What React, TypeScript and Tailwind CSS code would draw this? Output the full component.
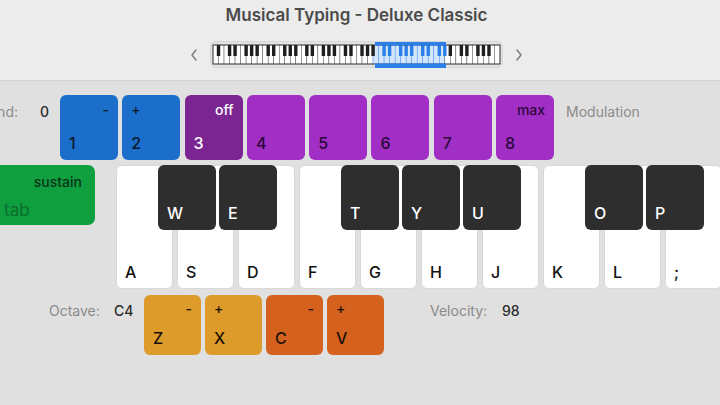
import React from 'react'

const FONT = { fontFamily: 'Inter, "Liberation Sans", Arial, sans-serif' }

const TOP_KEYS = [
  { k: '1', tag: '-', right: true, bg: 'bg-[#1b6fca]', fg: 'text-[#0b1a2e]' },
  { k: '2', tag: '+', right: false, bg: 'bg-[#1b6fca]', fg: 'text-[#0b1a2e]' },
  { k: '3', tag: 'off', right: true, bg: 'bg-[#7a2592]', fg: 'text-white' },
  { k: '4', tag: '', right: true, bg: 'bg-[#a22fc5]', fg: 'text-[#2a0838]' },
  { k: '5', tag: '', right: true, bg: 'bg-[#a22fc5]', fg: 'text-[#2a0838]' },
  { k: '6', tag: '', right: true, bg: 'bg-[#a22fc5]', fg: 'text-[#2a0838]' },
  { k: '7', tag: '', right: true, bg: 'bg-[#a22fc5]', fg: 'text-[#2a0838]' },
  { k: '8', tag: 'max', right: true, bg: 'bg-[#a22fc5]', fg: 'text-[#2a0838]' },
]

const OCTAVE_KEYS = [
  { k: 'Z', tag: '-', right: true, bg: 'bg-[#dc9b2b]' },
  { k: 'X', tag: '+', right: false, bg: 'bg-[#dc9b2b]' },
  { k: 'C', tag: '-', right: true, bg: 'bg-[#d5611f]' },
  { k: 'V', tag: '+', right: false, bg: 'bg-[#d5611f]' },
]

const WHITE = ['A', 'S', 'D', 'F', 'G', 'H', 'J', 'K', 'L', ';']

// black key offsets from the piano's left edge
const BLACK = [
  { k: 'W', x: 42 },
  { k: 'E', x: 103 },
  { k: 'T', x: 225 },
  { k: 'Y', x: 286 },
  { k: 'U', x: 347 },
  { k: 'O', x: 469 },
  { k: 'P', x: 530 },
]

function MiniPiano() {
  const n = 52
  const x0 = 3
  const y0 = 4
  const w = 287
  const h = 19
  const kw = w / n
  const hx0 = 165
  const hx1 = 236
  const inside = (x: number) => x >= hx0 && x <= hx1

  const whites = Array.from({ length: n }, (_, i) => x0 + i * kw)
  const blacks: number[] = []
  for (let i = 0; i < n - 1; i++) {
    const name = 'ABCDEFG'[i % 7]
    if ('ACDFG'.includes(name)) blacks.push(x0 + (i + 1) * kw - 1.7)
  }

  return (
    <div className="w-[293px] h-[27px] rounded-[6px] bg-[#e3e3e3] border border-[#d6d6d6]">
      <svg width="293" height="27" viewBox="0 0 293 27" className="block -m-px">
        <rect x={hx0} y={1} width={hx1 - hx0} height={26} fill="#2a7fe8" />
        {whites.map((x, i) => (
          <rect
            key={i}
            x={x}
            y={y0}
            width={kw}
            height={h}
            fill={inside(x + kw / 2) ? '#d3e5fb' : '#ffffff'}
            stroke={inside(x + kw / 2) ? '#5a9cec' : '#555'}
            strokeWidth={0.5}
          />
        ))}
        {blacks.map((x, i) => (
          <rect
            key={i}
            x={x}
            y={y0}
            width={3.4}
            height={11}
            fill={inside(x + 1.7) ? '#2a7fe8' : '#1e1e1e'}
          />
        ))}
        <rect x={x0} y={y0} width={w} height={h} fill="none" stroke="#333" strokeWidth={0.8} />
        <rect x={hx0} y={1} width={hx1 - hx0} height={3.5} fill="#2a7fe8" />
        <rect x={hx0} y={22.5} width={hx1 - hx0} height={4.5} fill="#2a7fe8" />
      </svg>
    </div>
  )
}

function Chevron({ dir }: { dir: 'left' | 'right' }) {
  return (
    <svg width="8" height="12" viewBox="0 0 8 12" className="text-[#7a7a7a]">
      <polyline
        points={dir === 'left' ? '6,1 2,6 6,11' : '2,1 6,6 2,11'}
        fill="none"
        stroke="currentColor"
        strokeWidth="1.4"
        strokeLinecap="round"
        strokeLinejoin="round"
      />
    </svg>
  )
}

export default function App() {
  return (
    <div className="w-[720px] h-[405px] overflow-hidden bg-[#e0e0e0] flex flex-col" style={FONT}>
      <header className="h-[81px] shrink-0 bg-[#ececec] border-b border-[#d2d2d2] flex flex-col items-center pr-[7px]">
        <h1 className="mt-[5px] text-[17px] leading-[21px] font-semibold text-[#4b4b4b]">
          Musical Typing - Deluxe Classic
        </h1>
        <div className="mt-[15px] flex items-center gap-[12px]">
          <Chevron dir="left" />
          <MiniPiano />
          <Chevron dir="right" />
        </div>
      </header>

      <div className="flex flex-col pt-[14px]">
        {/* pitch bend + modulation row */}
        <div className="flex items-start h-[65px]">
          <div className="w-[18px] flex justify-end whitespace-nowrap">
            <span className="mt-[6px] text-[14px] text-[#8a8a8a]">Pitch Bend:</span>
          </div>
          <span className="ml-[22px] w-[20px] mt-[6px] text-[14px] font-medium text-[#2a2a2a]">0</span>
          <div className="flex gap-[4.3px]">
            {TOP_KEYS.map((t) => (
              <div
                key={t.k}
                className={`w-[58px] h-[65px] rounded-[6px] ${t.bg} ${t.fg} flex flex-col justify-between px-[9px] pt-[6px] pb-[7px]`}
              >
                <span className={`text-[14px] leading-[17px] h-[17px] font-medium ${t.right ? 'text-right' : 'text-left'}`}>
                  {t.tag}
                </span>
                <span className="text-[16px] leading-[19px] font-medium">{t.k}</span>
              </div>
            ))}
          </div>
          <span className="ml-[12px] mt-[6px] text-[14px] text-[#8c8c8c]">Modulation</span>
        </div>

        {/* sustain + piano row */}
        <div className="flex items-start mt-[5px]">
          <div className="w-[95px] h-[60px] rounded-r-[7px] bg-[#0f9f3e] flex flex-col justify-between pt-[8px] pb-[5px] shrink-0">
            <span className="text-[14px] leading-[17px] text-right pr-[13px] font-medium text-[#0a3417]">sustain</span>
            <span className="text-[17px] leading-[20px] pl-[4px] text-[#0b6d2e]">tab</span>
          </div>
          <div className="relative ml-[21px] h-[124px]">
            <div className="flex gap-[4px]">
              {WHITE.map((k) => (
                <div
                  key={k}
                  className="w-[57px] h-[124px] shrink-0 rounded-[6px] bg-white border border-[#d8d8d8] flex items-end px-[8px] pb-[6px]"
                >
                  <span className="text-[16px] leading-[19px] font-medium text-[#111]">{k}</span>
                </div>
              ))}
            </div>
            {BLACK.map((b) => (
              <div
                key={b.k}
                className="absolute top-0 w-[58px] h-[65px] rounded-[6px] bg-[#2e2e2e] flex items-end px-[9px] pb-[8px]"
                style={{ left: b.x }}
              >
                <span className="text-[16px] leading-[18px] font-medium text-white">{b.k}</span>
              </div>
            ))}
          </div>
        </div>

        {/* octave + velocity row */}
        <div className="flex items-start mt-[6px]">
          <span className="ml-[49px] w-[65px] mt-[5px] text-[14px] text-[#8a8a8a]">Octave:</span>
          <span className="w-[30px] mt-[5px] text-[14px] font-medium text-[#2a2a2a]">C4</span>
          <div className="flex gap-[4px]">
            {OCTAVE_KEYS.map((t) => (
              <div
                key={t.k}
                className={`w-[57px] h-[60px] rounded-[6px] ${t.bg} text-[#1a1208] flex flex-col justify-between px-[9px] pt-[5px] pb-[7px]`}
              >
                <span className={`text-[14px] leading-[17px] font-medium ${t.right ? 'text-right' : 'text-left'}`}>{t.tag}</span>
                <span className="text-[16px] leading-[19px] font-medium">{t.k}</span>
              </div>
            ))}
          </div>
          <span className="ml-[46px] w-[72px] mt-[5px] text-[14px] text-[#8a8a8a]">Velocity:</span>
          <span className="mt-[5px] text-[14px] font-medium text-[#2a2a2a]">98</span>
        </div>
      </div>
    </div>
  )
}
